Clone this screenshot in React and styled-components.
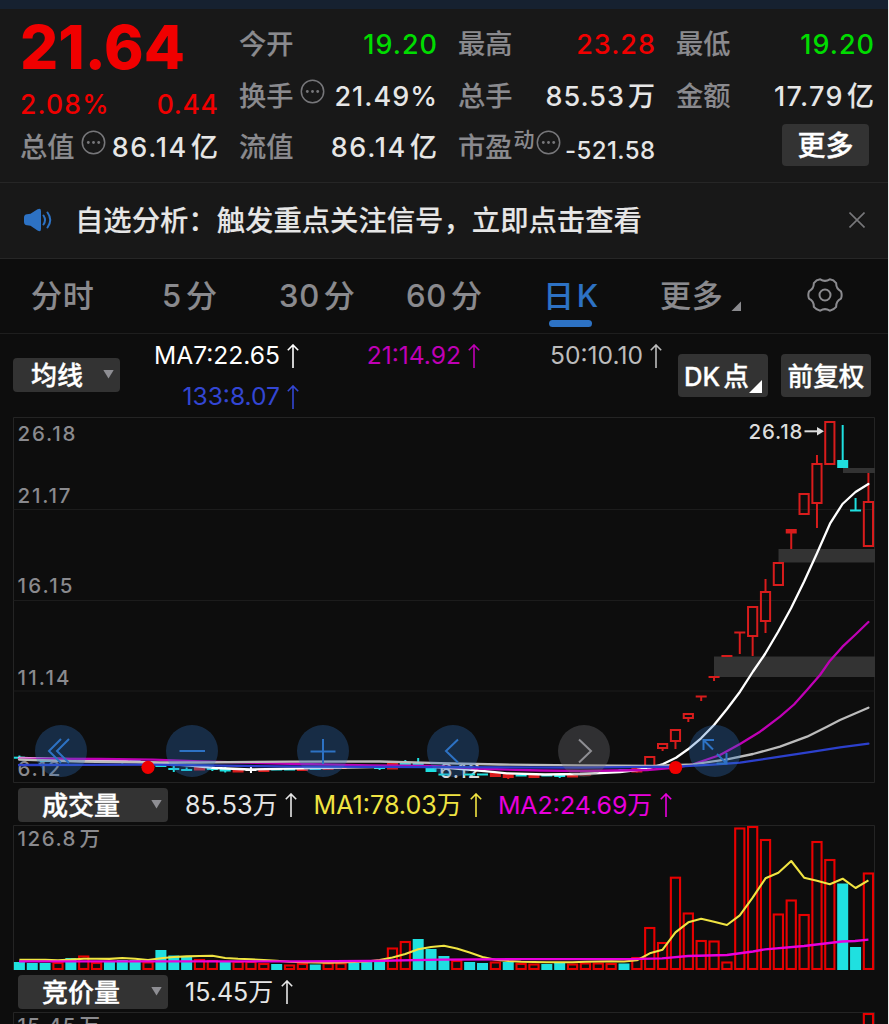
import React from 'react';
import styled, { createGlobalStyle } from 'styled-components';

const GlobalStyle = createGlobalStyle`
  * {
    box-sizing: border-box;
  }
  body {
    margin: 0;
    background: #0d0d0d;
    font-family: Inter, "Noto Sans CJK SC", sans-serif;
    overflow: hidden;
  }
`

const Page = styled.div`
  width: 889px;
  height: 1024px;
  overflow: hidden;
  background: #0d0d0d;
  border-right: 1px solid #e8e8e8;
`

const TopStrip = styled.div`
  height: 9px;
  background: #162130;
`

/* ---------- quote header ---------- */

const Quote = styled.section`
  display: grid;
  grid-template-columns: 198px 198px 197px 198px;
  grid-template-rows: 52px 52px 50px;
  column-gap: 21px;
  height: 174px;
  padding: 10px 0 0 20px;
  background: #181818;
  border-bottom: 1px solid #262626;
`

const Cell = styled.div`
  display: flex;
  align-items: center;
  justify-content: space-between;
  white-space: nowrap;
`

const Price = styled.div`
  line-height: 52px;
  margin-top: 4px;
  font-size: 60px;
  font-weight: 800;
  color: #f00000;
`

const Change = styled.span`
  margin: 13px ${props => -(props.$spacing || 0)}px 0 0;
  font-size: 26.5px;
  font-weight: 450;
  letter-spacing: ${props => props.$spacing || 0}px;
  line-height: 36px;
  color: #f00000;
`

const Label = styled.span`
  display: flex;
  align-items: center;
  font-size: 27.2px;
  font-weight: 500;
  line-height: 40px;
  color: #8a8a8e;
  -webkit-text-stroke: 0.15px currentColor;
`

const Value = styled.span`
  margin-top: ${props => props.$drop || 0}px;
  margin-right: ${props => (props.$unit ? 0 : -(props.$spacing ?? 1))}px;
  font-size: ${props => props.$size || 27}px;
  font-weight: 500;
  line-height: 40px;
  letter-spacing: ${props => props.$spacing ?? 1}px;
  color: ${props => props.$color || '#e6e6e6'};
`

const Unit = styled.span`
  margin-left: 3px;
  letter-spacing: 0;
  -webkit-text-stroke: 0.1px currentColor;
`

const Sup = styled.span`
  margin: -17px 0 0 1px;
  font-size: 21px;
  -webkit-text-stroke: 0;
`

const HintIcon = styled.svg`
  width: 25px;
  height: 25px;
  margin: -12px 0 0 ${props => props.$left}px;
  fill: #77777a;
`

const MoreButton = styled.button`
  width: 87px;
  height: 42px;
  margin: -6px 5px 0 auto;
  padding: 1px 0 0;
  border: 0;
  border-radius: 4px;
  background: #333333;
  color: #ffffff;
  font: 500 28px/42px Inter, "Noto Sans CJK SC", sans-serif;
  -webkit-text-stroke: 0.35px currentColor;
`

/* ---------- notice ---------- */

const Notice = styled.section`
  display: flex;
  align-items: center;
  height: 76px;
  padding: 0 23px 1px 23px;
  background: #181818;
  border-bottom: 1px solid #262626;
`

const NoticeText = styled.span`
  flex: 1;
  margin-left: 22px;
  padding-top: 1px;
  font-size: 28.35px;
  font-weight: 500;
  line-height: 40px;
  color: #e6e6e6;
  -webkit-text-stroke: 0.1px currentColor;
`

/* ---------- tabs ---------- */

const Tabs = styled.nav`
  display: flex;
  height: 75px;
  padding-left: 31px;
  border-bottom: 1px solid #1e1e1e;
`

const Tab = styled.div`
  display: flex;
  position: relative;
  width: ${props => props.$width}px;
  gap: ${props => props.$gap ?? 4}px;
  font-size: 31px;
  font-weight: 500;
  line-height: 73px;
  letter-spacing: 0.7px;
  white-space: nowrap;
  color: ${props => (props.$active ? '#2d72c4' : '#8a8a8e')};
  -webkit-text-stroke: 0.15px currentColor;
`

const Underline = styled.i`
  position: absolute;
  left: 5px;
  bottom: 6px;
  width: 43px;
  height: 7px;
  border-radius: 3.5px;
  background: #2d72c4;
`

const Corner = styled.i`
  width: ${props => props.$size}px;
  height: ${props => props.$size}px;
  background: ${props => props.$color};
  clip-path: polygon(100% 0, 100% 100%, 0 100%);
`

const TabCorner = styled(Corner)`
  margin: 42px 0 0 4px;
`

const Gear = styled.svg`
  width: 36px;
  height: 36px;
  margin-top: 18px;
  fill: none;
  stroke: #8a8a8e;
  stroke-width: 2;
`

/* ---------- indicator rows ---------- */

const Averages = styled.section`
  display: flex;
  height: 83px;
  padding-left: 13px;
`

const Picker = styled.button`
  display: flex;
  align-items: center;
  justify-content: space-between;
  width: ${props => props.$width}px;
  height: 34px;
  margin: ${props => props.$top || 0}px 0 0;
  padding: 0 6px 0 ${props => props.$pad}px;
  border: 0;
  border-radius: 4px;
  background: #333333;
  color: #ffffff;
  font: 500 26px/34px Inter, "Noto Sans CJK SC", sans-serif;
  -webkit-text-stroke: 0.35px currentColor;
`

const PickerText = styled.span`
  padding-top: 2px;
`

const Caret = styled.i`
  width: 11px;
  height: 9px;
  margin-bottom: 2px;
  background: #8e8e93;
  clip-path: polygon(0 0, 100% 0, 50% 100%);
`

const AverageList = styled.div`
  display: grid;
  grid-template-columns: 179px 181px 182px;
  grid-template-rows: 41px 41px;
  padding-top: 1px;
`

const Reading = styled.span`
  display: flex;
  align-items: center;
  justify-content: flex-end;
  gap: ${props => props.$gap || 7}px;
  font-size: ${props => props.$size || 24.6}px;
  font-weight: 400;
  line-height: 41px;
  white-space: nowrap;
  color: ${props => props.$color};
`

const ChartButton = styled.button`
  display: flex;
  align-items: center;
  justify-content: center;
  gap: 3px;
  position: relative;
  width: 90px;
  height: 43px;
  margin: 20px 0 0 ${props => props.$left}px;
  padding: 1px ${props => props.$right || 0}px 0 0;
  border: 0;
  border-radius: 4px;
  background: #333333;
  color: #ffffff;
  font: 500 25.7px/43px Inter, "Noto Sans CJK SC", sans-serif;
  white-space: nowrap;
  -webkit-text-stroke: 0.3px currentColor;
`

const ButtonCorner = styled(Corner)`
  position: absolute;
  right: 6px;
  bottom: 4px;
`

const VolumeRow = styled.section`
  display: flex;
  align-items: center;
  gap: 16px;
  height: 42px;
  padding: 2px 0 0 18px;
`

const FirstReading = styled(Reading)`
  margin-left: 1px;
`

/* ---------- charts ---------- */

const ChartArea = styled.div`
  position: relative;
  height: ${props => props.$height}px;
  svg {
    display: block;
  }
`

const ChartSvg = styled.svg`
  width: 888px;
  height: ${props => props.$height}px;
  font-family: Inter, "Noto Sans CJK SC", sans-serif;
  font-size: 20.5px;
  font-weight: 500;
  fill: none;
`

const Tools = styled.div`
  display: flex;
  justify-content: space-between;
  position: absolute;
  left: 35px;
  top: 308.4px;
  width: 706px;
`

const Tool = styled.span`
  width: 52px;
  height: 52px;
  border-radius: 50%;
  background: ${props => (props.$muted ? 'rgba(110, 110, 116, 0.36)' : 'rgba(47, 116, 196, 0.31)')};
  svg {
    width: 52px;
    height: 52px;
    fill: none;
    stroke: ${props => (props.$muted ? '#8e8e93' : '#2d72c4')};
    stroke-width: 2;
  }
`

const RED = '#e80000'
const CANDLE_RED = '#d81c1c'
const TEAL = '#1fe0e0'

// centre of the bar for day i
const cx = i => 19.4 + i * 12.864

// r = rise (hollow), t = fall (filled), then the top edge of the bar
const volumes = [
  't962', 't963', 't963', 'r962', 't958', 'r955.5', 'r962', 't962', 't960', 't960',
  'r961.5', 't950', 't955.5', 't957', 'r959', 'r960', 't961.5', 'r961', 'r961', 'r963',
  't964', 'r964.5', 'r963', 't964.5', 'r962.5', 'r962.5', 't963', 't962', 't961', 'r947.5',
  'r941', 't939', 't949', 't956', 'r960', 't962', 't963', 'r961.5', 't962', 'r963',
  'r963.5', 't964', 't963', 'r963.5', 'r962.5', 'r962.5', 'r963', 't963.5', 'r957', 'r927',
  'r942', 'r876.7', 'r912.5', 'r940', 'r940.5', 'r961.5', 'r827.5', 'r826', 'r839', 'r913.5',
  'r899.5', 'r914', 'r841', 'r859', 't883.5', 't947', 'r872.5',
]

// [day, body top, body bottom, wick top, wick bottom]
const risers = [
  [66, 501, 547, 473, 501], [63, 421, 465], [62, 463, 504, 455, 528], [61, 493, 515],
  [59, 562, 586], [58, 591, 622, 579, 633], [57, 606, 637, 606, 656], [52, 713, 719, 713, 722],
  [51, 729, 742, 729, 749], [50, 743, 749, 743, 751], [49, 756, 767],
]

// thin or filled bodies: the same five numbers and a colour
const solids = [
  [0, 756.7, 758.7, 755.5, 759.5, TEAL], [2, 760, 762, 0, 0, TEAL], [3, 760, 762, 0, 0, CANDLE_RED],
  [4, 760, 762, 0, 0, TEAL], [5, 760, 762, 0, 0, CANDLE_RED], [6, 760, 762, 0, 0, CANDLE_RED],
  [8, 760, 762, 759, 763.5, TEAL], [9, 760, 762, 0, 0, TEAL], [11, 765, 767, 0, 0, TEAL],
  [12, 768, 770, 766, 772, TEAL], [13, 769, 771, 767.5, 771, TEAL], [14, 767, 770.5, 0, 0, CANDLE_RED],
  [15, 768, 770, 766.5, 771, TEAL], [16, 768.5, 771.5, 767, 772.5, TEAL], [17, 768.5, 772.5, 0, 0, CANDLE_RED],
  [18, 769, 771, 767, 773, '#ffffff'], [19, 768.5, 772, 0, 0, CANDLE_RED], [20, 768.5, 770.5, 0, 0, TEAL],
  [21, 768.5, 770.5, 0, 0, TEAL], [22, 768.5, 771, 0, 0, CANDLE_RED], [23, 768, 770, 0, 0, TEAL],
  [24, 768, 770, 0, 0, CANDLE_RED], [25, 767, 769, 0, 0, CANDLE_RED], [27, 766, 768, 0, 0, CANDLE_RED],
  [28, 767, 769, 766, 770, TEAL], [29, 763, 769.5, 0, 0, CANDLE_RED], [30, 762.5, 765, 760, 765, TEAL],
  [31, 762.5, 765, 758, 767, TEAL], [32, 768, 772, 0, 0, TEAL], [33, 773.5, 775.5, 0, 0, TEAL],
  [35, 773.5, 775.5, 0, 0, TEAL], [36, 773.5, 775.5, 0, 0, TEAL], [37, 772, 777, 0, 0, CANDLE_RED],
  [38, 774, 778, 774, 779, CANDLE_RED], [39, 774.5, 776.5, 0, 0, TEAL], [40, 774, 778, 0, 0, CANDLE_RED],
  [41, 774.5, 776.5, 0, 0, TEAL], [42, 775, 777, 775, 778, TEAL], [43, 774, 777.5, 0, 0, CANDLE_RED],
  [44, 773, 775.5, 0, 0, CANDLE_RED], [45, 772.5, 774, 0, 0, CANDLE_RED], [47, 769, 771, 0, 0, TEAL],
  [48, 768, 772.5, 766, 772.5, CANDLE_RED], [53, 695.5, 697.5, 696, 701, CANDLE_RED],
  [54, 676, 678, 676, 681, CANDLE_RED], [55, 655, 657, 0, 0, CANDLE_RED], [56, 631.5, 633.5, 632, 654, CANDLE_RED],
  [60, 529, 533.5, 529, 549, CANDLE_RED], [64, 460, 468, 425, 460, TEAL], [65, 509.5, 511.5, 498, 511, TEAL],
]

const ma7 = '19,758 60,759 100,760 150,762.5 190,765.5 215,768 250,769.5 290,768.7 340,767.5 400,766.5 428,766.5 450,768 490,771.7 507,773.3 545,774.5 580,774 620,772 637,770 650,768 663,764 676,757.7 688,749.3 701,738.3 714,725 727,709 740,691.7 753,671.5 765,654 778,632 791,608.3 804,581.7 817,553.3 830,523.7 842.5,504 855.5,492 868.4,484'
const ma21 = '19,758.7 100,759 153,759.7 200,761.3 300,764 370,765.3 430,766 490,769 540,770.5 580,771 647,770 676,767.7 693,764.3 720,755 740,744 760,731.7 780,716.7 794,704.5 807,690 820,675 830,660.7 842.5,646.7 855.5,634.5 868.4,622'
const ma50 = '19,759.5 80,761.5 147,762.5 200,762.5 290,761.6 380,761.5 440,763.2 500,764.5 580,765.4 653,766 693,764.3 727,759.3 753,754 780,746.7 807,736.7 827,726.7 840,720 868.4,707.7'
const ma133 = '19,765 153,764.7 300,766.7 440,767.2 580,767.7 676,766.7 713,764.7 740,762.7 780,756.7 813,751.7 840,747.3 868.4,743.7'

const volMa1 = [
  959.7, 959.7, 959.8, 960.2, 959.6, 958.7, 958.7, 958.9, 958, 958.7, 960, 958.3, 957, 956.4, 956, 955.7, 958,
  958.8, 959.3, 960, 960.7, 961.7, 962.3, 962.5, 962.7, 962.5, 962, 961.5, 960, 957.5, 954, 949.3, 947, 945.7,
  948.6, 952.6, 957, 959.7, 961, 961.7, 962, 962.3, 962.3, 962.3, 961.8, 961.5, 961.3, 961.5, 960.3, 953.3,
  949.7, 932.3, 922.3, 918.7, 921.7, 925, 915.3, 897.7, 878.3, 872.7, 861, 877.7, 880.7, 884.3, 878.7, 888, 880.3,
].map((y, i) => `${cx(i)},${y}`).join(' ')

const volMa2 = '19,961.3 300,961.3 370,961 440,959.6 520,959.2 630,959.2 662,958.3 688,956 727,955 753,951.5 765,949.3 804,946 842,941.5 855,941 868.4,939.7'

// six flat teeth with shallow dips between them
const polar = (r, deg) => {
  const a = (deg * Math.PI) / 180
  return `${(18 + r * Math.cos(a)).toFixed(2)} ${(18 + r * Math.sin(a)).toFixed(2)}`
}
const gearPath = [0, 60, 120, 180, 240, 300]
  .map((a, k) => `${k ? 'L' : 'M'}${polar(16.4, a - 13)}Q${polar(17.4, a)} ${polar(16.4, a + 13)}Q${polar(12.6, a + 30)} ${polar(16.4, a + 47)}`)
  .join('') + 'Z'

const Arrow = () => (
  <svg width="12" height="24" viewBox="0 0 12 24" fill="none" stroke="currentColor" strokeWidth="1.6">
    <path d="M6 24V1M0.8 6.2L6 1l5.2 5.2" />
  </svg>
)

const Hint = ({ left }) => (
  <HintIcon $left={left} viewBox="0 0 25 25">
    <circle cx="12.5" cy="12.5" r="11.2" fill="none" stroke="#77777a" strokeWidth="1.5" />
    <circle cx="7.3" cy="12.5" r="1.4" />
    <circle cx="12.5" cy="12.5" r="1.4" />
    <circle cx="17.7" cy="12.5" r="1.4" />
  </HintIcon>
)

function Frame({ top, bottom, lines = [] }) {
  return (
    <g stroke="#242424">
      <path d={`M13.5 ${bottom}V${top}H874.5V${bottom}Z`} />
      {lines.map(y => <path key={y} d={`M13.5 ${y}H874.5`} stroke="#1c1c1c" />)}
    </g>
  )
}

function PriceChart() {
  return (
    <ChartArea $height={366}>
      <ChartSvg $height={366} viewBox="0 417 888 366">
        <Frame top={417.5} bottom={782.5} lines={[509.5, 600.5, 691]} />
        <g fill="#333333">
          <rect x="714" y="656.5" width="161" height="20.5" />
          <rect x="778.5" y="549" width="96.5" height="13.5" />
          <rect x="843" y="468" width="32" height="5" />
        </g>
        <g fill="#8a8a8e">
          <text x="17.5" y="441" textLength="58">26.18</text>
          <text x="17.5" y="502.5" textLength="53">21.17</text>
          <text x="17.5" y="593" textLength="55">16.15</text>
          <text x="17.5" y="684.7" textLength="52">11.14</text>
          <text x="17.5" y="775.5" textLength="43">6.12</text>
        </g>
        <text x="439.5" y="777.5" textLength="41" fill="#dcdcdc">6.12</text>
        <g stroke={CANDLE_RED} strokeWidth="2">
          {risers.map(([i, top, bottom, high, low]) => (
            <g key={i}>
              <rect x={cx(i) - 4.6} y={top + 1} width="9.2" height={bottom - top - 2} />
              {high < top && <path d={`M${cx(i)} ${high}V${top}`} />}
              {low > bottom && <path d={`M${cx(i)} ${bottom}V${low}`} />}
            </g>
          ))}
        </g>
        {solids.map(([i, top, bottom, high, low, color]) => (
          <g key={i} fill={color}>
            <rect x={cx(i) - 5.5} y={top} width="11" height={bottom - top} />
            <rect x={cx(i) - 1} y={high} width="2" height={low - high} />
          </g>
        ))}
        <g strokeWidth="2.3" strokeLinejoin="round" strokeLinecap="round">
          <polyline points={ma7} stroke="#ffffff" />
          <polyline points={ma21} stroke="#bf00b5" />
          <polyline points={ma50} stroke="#bcbcbc" />
          <polyline points={ma133} stroke="#2c40cc" />
        </g>
        <circle cx="148" cy="767.3" r="6.6" fill="#f00000" />
        <circle cx="675.6" cy="767.5" r="6.6" fill="#f00000" />
        <text x="748.5" y="439" textLength="54" fill="#dcdcdc">26.18</text>
        <path d="M804.5 431.3H819" stroke="#dcdcdc" strokeWidth="2" />
        <path d="M817 427l7 4.3l-7 4.3z" fill="#dcdcdc" />
      </ChartSvg>
      <Tools>
        <Tool><svg viewBox="0 0 52 52"><path d="M26 14L14 26L26 38M34 14L22 26L34 38" /></svg></Tool>
        <Tool><svg viewBox="0 0 52 52"><path d="M13.5 26H39" /></svg></Tool>
        <Tool><svg viewBox="0 0 52 52"><path d="M13.5 26.5H38.5M26 14V39" /></svg></Tool>
        <Tool><svg viewBox="0 0 52 52"><path d="M31 14.5L19 26L31 37.5" /></svg></Tool>
        <Tool $muted><svg viewBox="0 0 52 52"><path d="M21 14.5L33 26L21 37.5" /></svg></Tool>
        <Tool><svg viewBox="0 0 52 52"><path d="M14.5 25V15H25M14.5 15L24 24.5M28 29L37.5 38.5M27.5 38.5H37.5V28" /></svg></Tool>
      </Tools>
    </ChartArea>
  )
}

function VolumeChart() {
  return (
    <ChartArea $height={145}>
      <ChartSvg $height={145} viewBox="0 825 888 145">
        <Frame top={825.5} bottom={970.5} />
        <g fill="#8a8a8e">
          <text x="17.5" y="846.3" textLength="58">126.8</text>
          <text x="79.5" y="846.3">万</text>
        </g>
        {volumes.map((v, i) => {
          const top = Number(v.slice(1))
          return v[0] === 't'
            ? <rect key={i} x={cx(i) - 5.5} y={top} width="11" height={970 - top} fill={TEAL} />
            : <rect key={i} x={cx(i) - 4.6} y={top + 1} width="9.2" height={968 - top} stroke={RED} strokeWidth="2.1" />
        })}
        <polyline points={volMa1} stroke="#f0e442" strokeWidth="2.1" strokeLinejoin="round" />
        <polyline points={volMa2} stroke="#e800dc" strokeWidth="2.3" strokeLinejoin="round" />
      </ChartSvg>
    </ChartArea>
  )
}

function AuctionChart() {
  return (
    <ChartArea $height={12}>
      <ChartSvg $height={12} viewBox="0 1012 888 12">
        <Frame top={1012.5} bottom={1030} />
        <g fill="#8a8a8e">
          <text x="17.5" y="1033" textLength="58">15.45</text>
          <text x="79.5" y="1033">万</text>
        </g>
        <rect x={cx(66) - 4.6} y="1014" width="9.2" height="20" stroke={RED} strokeWidth="2.1" />
      </ChartSvg>
    </ChartArea>
  )
}

export default function App() {
  return (
    <Page>
      <GlobalStyle />
      <TopStrip />

      <Quote>
        <Cell><Price>21.64</Price></Cell>
        <Cell><Label>今开</Label><Value $color="#00dc00">19.20</Value></Cell>
        <Cell><Label>最高</Label><Value $color="#f00000">23.28</Value></Cell>
        <Cell><Label>最低</Label><Value $color="#00dc00">19.20</Value></Cell>

        <Cell><Change $spacing={1.2}>2.08%</Change><Change $spacing={0.7}>0.44</Change></Cell>
        <Cell><Label>换手<Hint left={7} /></Label><Value>21.49%</Value></Cell>
        <Cell><Label>总手</Label><Value $unit>85.53<Unit>万</Unit></Value></Cell>
        <Cell><Label>金额</Label><Value $unit $spacing={1.4}>17.79<Unit>亿</Unit></Value></Cell>

        <Cell><Label>总值<Hint left={7} /></Label><Value $unit $spacing={1.7}>86.14<Unit>亿</Unit></Value></Cell>
        <Cell><Label>流值</Label><Value $unit $spacing={1.7}>86.14<Unit>亿</Unit></Value></Cell>
        <Cell><Label>市盈<Sup>动</Sup><Hint left={2} /></Label><Value $size={24} $spacing={0.4} $drop={5}>-521.58</Value></Cell>
        <Cell><MoreButton>更多</MoreButton></Cell>
      </Quote>

      <Notice>
        <svg width="30" height="24" viewBox="0 0 30 24" fill="#2d72c4">
          <path d="M1 9.5Q1 6.5 4 6.3L7.5 5.8L14.5 1.2Q18 -0.5 18 3V21Q18 24.5 14.5 22.6L7.5 17.7L4 17.3Q1 17 1 14Z" />
          <path d="M20.5 7.5Q23.5 12 20.5 16.5M24.5 4.5Q30 12 24.5 19.5" fill="none" stroke="#2d72c4" strokeWidth="2" strokeLinecap="round" />
        </svg>
        <NoticeText>自选分析：触发重点关注信号，立即点击查看</NoticeText>
        <svg width="16" height="16" viewBox="0 0 16 16" stroke="#77777a" strokeWidth="1.6">
          <path d="M0.5 0.5L15.5 15.5M15.5 0.5L0.5 15.5" />
        </svg>
      </Notice>

      <Tabs>
        <Tab $width={131}>分时</Tab>
        <Tab $width={117}><span>5</span>分</Tab>
        <Tab $width={127}><span>30</span>分</Tab>
        <Tab $width={137}><span>60</span>分</Tab>
        <Tab $width={117} $gap={2} $active>日<span>K</span><Underline style={{ left: 6 }} /></Tab>
        <Tab $width={147}>更多<TabCorner $size={10} $color="#8a8a8e" /></Tab>
        <Gear viewBox="0 0 36 36">
          <path d={gearPath} strokeLinejoin="round" />
          <circle cx="18" cy="18" r="5.5" />
        </Gear>
      </Tabs>

      <Averages>
        <Picker $width={107} $top={24} $pad={18}><PickerText>均线</PickerText><Caret /></Picker>
        <AverageList>
          <Reading $color="#ffffff">MA7:22.65<Arrow /></Reading>
          <Reading $color="#bf00b5">21:14.92<Arrow /></Reading>
          <Reading $color="#bcbcbc">50:10.10<Arrow /></Reading>
          <Reading $color="#3346d3">133:8.07<Arrow /></Reading>
        </AverageList>
        <ChartButton $left={16} $right={13}>DK<span>点</span><ButtonCorner $size={13} $color="#ffffff" /></ChartButton>
        <ChartButton $left={13}>前复权</ChartButton>
      </Averages>

      <PriceChart />

      <VolumeRow>
        <Picker $width={150} $pad={24}><PickerText>成交量</PickerText><Caret /></Picker>
        <FirstReading $color="#e6e6e6" $size={25} $gap={8}>85.53万<Arrow /></FirstReading>
        <Reading $color="#f0e442" $size={25.1} $gap={8}>MA1:78.03万<Arrow /></Reading>
        <Reading $color="#e800dc" $size={24.9} $gap={8}>MA2:24.69万<Arrow /></Reading>
      </VolumeRow>

      <VolumeChart />

      <VolumeRow>
        <Picker $width={150} $pad={24}><PickerText>竞价量</PickerText><Caret /></Picker>
        <FirstReading $color="#e6e6e6" $size={25} $gap={8}>15.45万<Arrow /></FirstReading>
      </VolumeRow>

      <AuctionChart />
    </Page>
  )
}
